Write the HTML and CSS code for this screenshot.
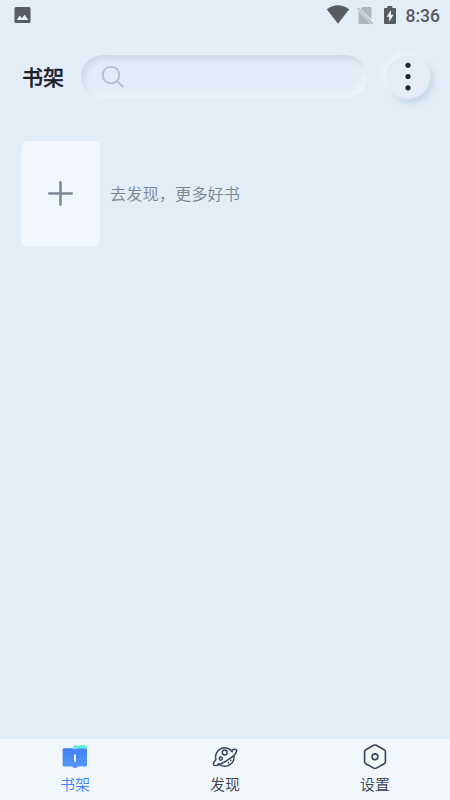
FILE: index.html
```html
<!DOCTYPE html>
<html lang="zh-CN">
<head>
<meta charset="utf-8">
<title>书架</title>
<link rel="stylesheet" href="styles.css">
</head>
<body>
<div class="app">
  <div class="status">
    <svg class="photo" width="17" height="16" viewBox="0 0 17 16"><rect x=".5" width="16" height="16" rx="1.6" fill="#585c60"/><path d="M2.700 13l3-4.400 2.200 2.600L10.700 7.800 14.300 13z" fill="#e9f2f9"/></svg>
    <svg class="wifi" width="24" height="19" viewBox="0 0 24 19"><path d="M12 18.800L.8 4.200Q12-3.600 23.200 4.200z" fill="#585c60"/></svg>
    <svg class="sim" width="17" height="18" viewBox="0 0 17 18"><path d="M5.200 0H13q1.400 0 1.400 1.400V12.600L3.600 1.800zM1.600 4L14 17H3q-1.400 0-1.400-1.500z" fill="#afb8c1"/><path d="M.6.8L15.800 16.900" stroke="#afb8c1" stroke-width="1.400"/></svg>
    <svg class="battery" width="12" height="18" viewBox="0 0 12 18"><path d="M3.300 0h5v2H11q1 0 1 1v14q0 1-1 1H1q-1 0-1-1V3q0-1 1-1h2.300z" fill="#585c60"/><path d="M7 4L2.600 10.700h2.600V16l4.300-7.200H7z" fill="#e9f2f9"/></svg>
    <span class="clock">8:36</span>
  </div>
  <header class="header">
    <h1>书架</h1>
    <div class="search"><svg width="24" height="24" viewBox="0 0 24 24" fill="none" stroke="#b9c1cb" stroke-width="2"><circle cx="10" cy="10" r="8.300"/><path d="M16 16l6.300 6"/></svg></div>
    <button class="more" aria-label="更多"><svg width="6" height="30" viewBox="0 0 6 30" fill="#20242f"><circle cx="3" cy="3.300" r="2.600"/><circle cx="3" cy="14.500" r="2.600"/><circle cx="3" cy="25.800" r="2.600"/></svg></button>
  </header>
  <main class="shelf">
    <div class="add"><svg width="27" height="27" viewBox="0 0 27 27" stroke="#7f8795" stroke-width="2.600" stroke-linecap="round"><path d="M13.500 2.300v22.400M2.300 13.500h22.400"/></svg></div>
    <p>去发现，更多好书</p>
  </main>
  <nav class="nav">
    <a class="tab active"><svg width="26" height="26" viewBox="0 0 26 26"><defs><linearGradient id="book" x1="0" y1="0" x2="0" y2="1"><stop offset="0" stop-color="#427ff5"/><stop offset="1" stop-color="#5799fa"/></linearGradient></defs><path d="M2 4.200h8.300q2 0 2.700 1 .7-1 2.700-1H23.600q1.400 0 1.400 1.400v15.600q0 1.200-1.300 1.200h-6.900q-1.500 0-2.100 1-1.700 1.500-3.400 0-.6-1-2.100-1H1.900Q.6 22.400.6 21.200V5.600Q.6 4.200 2 4.200z" fill="url(#book)"/><path d="M10.800 3q0-1.700 1.700-1.700h2.600q1 0 1.500.8.600-1 1.800-1h4.500q2.200 0 2.200 2.200v2.500q-.4-1.600-2-1.600h-7.200q-2.200 0-2.900 1.200-.5-1.200-2.200-1.200z" fill="#60efd5"/><path d="M13 11.300v5.500" stroke="#f2f7fc" stroke-width="2" stroke-linecap="round"/></svg><span>书架</span></a>
    <a class="tab"><svg width="26" height="26" viewBox="0 0 26 26" fill="none" stroke="#3b4157" stroke-width="1.500" stroke-linecap="round"><path d="M20.300 7.700A9.200 9.200 0 0 0 3.700 14.500M6.300 19.500A9.200 9.200 0 0 0 22 12.400"/><path d="M20.300 6c2.700-1.100 4-.9 4.300.2.600 2.600-4.300 7.100-9.800 10.500C8.600 20.500 2.300 23 1.500 20.800c-.4-1.200.8-3.300 2.500-5.200"/><circle cx="12.700" cy="8.500" r="2.400"/><circle cx="8.800" cy="14.600" r="1.600"/><path d="M16.600 19l.1-.1M18.700 16.500l.1-.1"/></svg><span>发现</span></a>
    <a class="tab"><svg width="26" height="26" viewBox="0 0 26 26" fill="none" stroke="#3b4157" stroke-width="1.600" stroke-linejoin="round"><path d="M11.700 1.300q1.300-.7 2.600 0l7.900 4.400q1.200.7 1.200 2v10q0 1.300-1.200 2l-7.900 4.400q-1.300.7-2.600 0l-7.900-4.400q-1.200-.7-1.200-2v-10q0-1.300 1.200-2z"/><circle cx="13" cy="12.800" r="2.900"/></svg><span>设置</span></a>
  </nav>
</div>
</body>
</html>
```
FILE: styles.css
```css
* { box-sizing: border-box; }
body {
  margin: 0;
  background: #e2edf7;
  font-family: "Noto Sans CJK SC", sans-serif;
}
.app {
  display: flex;
  flex-direction: column;
  height: 800px;
  overflow: hidden;
}
svg { display: block; flex: none; }
.status {
  display: flex;
  align-items: flex-start;
  height: 32px;
  padding: 7px 10px 0 14px;
}
.wifi { margin: -2px 0 0 295px; }
.sim { margin-left: 7px; }
.battery { margin: -1px 0 0 10px; }
.clock {
  margin-left: auto;
  font: 500 17.5px/18px Roboto, sans-serif;
  color: #54585d;
}
.header {
  display: flex;
  align-items: center;
  height: 89px;
  padding: 0 20px 0 22px;
}
h1 {
  width: 59px;
  margin: 0 0 2px;
  font-size: 21px;
  line-height: 30px;
  font-weight: 500;
  -webkit-text-stroke: .3px #1d222d;
  color: #1d222d;
}
.search {
  display: flex;
  align-items: center;
  width: 286px;
  height: 43px;
  padding-left: 20px;
  border-radius: 22px;
  background: #e2ecf8;
  box-shadow: inset 3px 4px 6px #cbdbe7, inset -3px -4px 6px #eef5fb;
}
.more {
  display: grid;
  place-items: center;
  width: 44px;
  height: 44px;
  margin-left: 19px;
  padding: 0;
  border: 0;
  border-radius: 50%;
  background: #e5ecf8;
  box-shadow: -3px -3px 5px #eff5fb, 3px 4px 7px #c4d7e5;
}
.shelf {
  display: flex;
  flex: 1;
  align-items: flex-start;
  padding: 20px 21px;
}
.add {
  display: grid;
  place-items: center;
  width: 79px;
  height: 105px;
  border-radius: 6px;
  background: #f1f7fc;
}
.shelf p {
  margin: 40px 0 0 10px;
  font-size: 16.25px;
  line-height: 25px;
  font-weight: 350;
  color: #7b8591;
}
.nav {
  display: grid;
  grid-template-columns: repeat(3, 1fr);
  height: 61px;
  background: #f2f7fc;
}
.tab {
  display: flex;
  flex-direction: column;
  align-items: center;
  padding-top: 5px;
  font-size: 15px;
  line-height: 22px;
  font-weight: 350;
  color: #363c50;
}
.tab span { margin-top: 3px; }
.active { color: #3d86f5; }
```
